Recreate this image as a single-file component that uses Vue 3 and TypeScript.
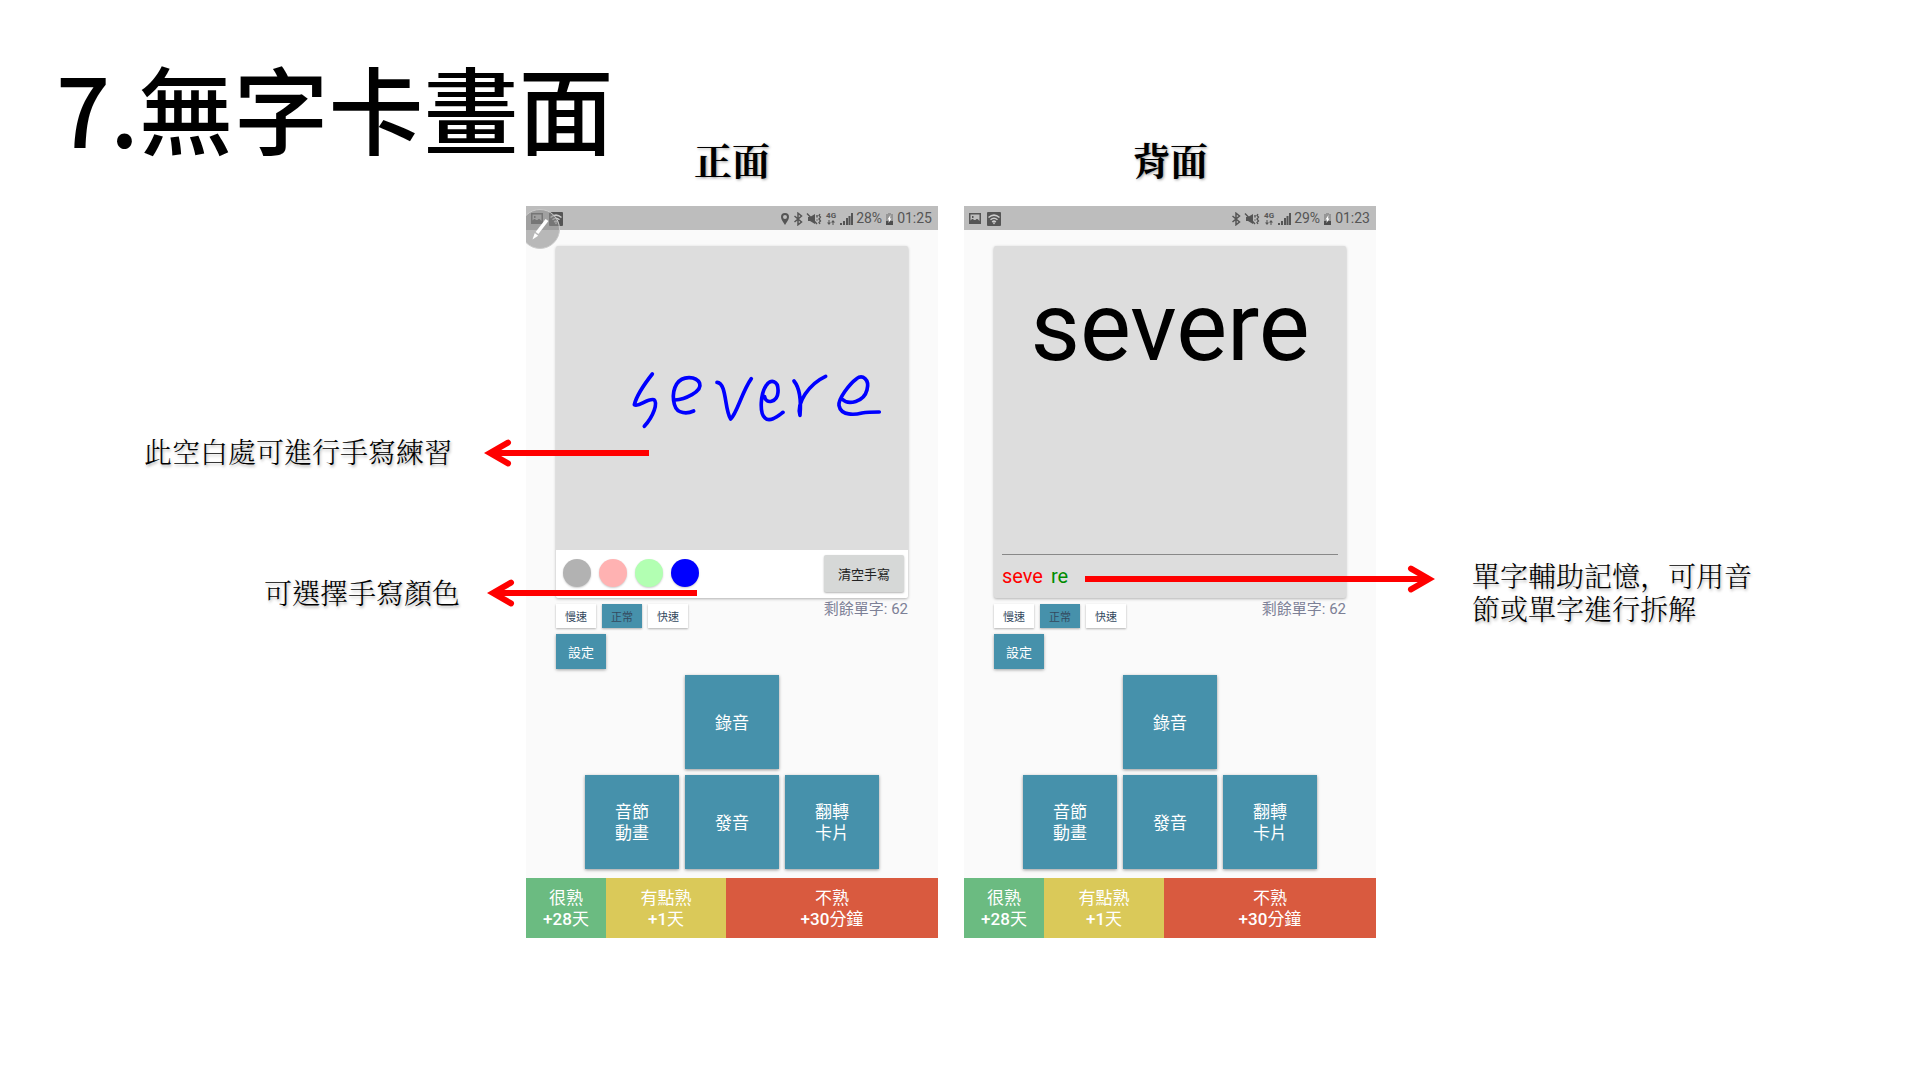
<script setup lang="ts">
import { ref } from 'vue'

interface Phone {
  id: string
  caption: string
  battery: string
  time: string
  front: boolean
}

interface Rating {
  name: string
  amount: string
  unit: string
  tone: string
}

const phones: Phone[] = [
  { id: 'front', caption: '正面', battery: '28%', time: '01:25', front: true },
  { id: 'back', caption: '背面', battery: '29%', time: '01:23', front: false },
]
const inks = [
  { name: '灰色', value: '#b2b2b2' },
  { name: '紅色', value: '#ffb2b2' },
  { name: '綠色', value: '#b2ffb2' },
  { name: '藍色', value: '#0000ff' },
]
const ink = ref('#0000ff')
const speeds = ['慢速', '正常', '快速']
const speed = ref('正常')
const ratings: Rating[] = [
  { name: '很熟', amount: '+28', unit: '天', tone: 'good' },
  { name: '有點熟', amount: '+1', unit: '天', tone: 'fair' },
  { name: '不熟', amount: '+30', unit: '分鐘', tone: 'poor' },
]
</script>

<template>
  <main class="slide">
    <h1 class="title">7.無字卡畫面</h1>
    <div class="stage">
      <div class="notes notes-left">
        <p class="note-draw">此空白處可進行手寫練習</p>
        <p class="note-color">可選擇手寫顏色</p>
      </div>

      <figure v-for="p in phones" :key="p.id" :class="['figure', p.id]">
        <figcaption class="caption">{{ p.caption }}</figcaption>
        <div class="phone">
          <div class="status">
            <svg class="icon" width="15" height="12" viewBox="0 0 15 12">
              <path fill="#555" fill-rule="evenodd" d="M0 0h12v11H0zM1.500 1.500v6l1.500-1.500h1l1 1h1.500l1-1h1l2 2v-6.500zM3 3h1.500v2H3z" />
            </svg>
            <svg class="icon" width="14" height="14" viewBox="0 0 14 14">
              <rect width="14" height="14" rx="1" fill="#555" />
              <path d="M1.500 5.500Q7 .8 12.500 5.500M3.500 7.800Q7 4.800 10.500 7.800M5.200 10Q7 8.300 8.800 10" fill="none" stroke="#ccc" stroke-width="1.500" />
              <path d="M5.500 10.500h3L7 12.500z" fill="#ccc" />
            </svg>
            <span class="spacer"></span>
            <svg v-if="p.front" class="icon" width="10" height="14" viewBox="0 0 10 14">
              <path fill="#555" fill-rule="evenodd" d="M5 1a4 4 0 0 1 4 4c0 3-2.500 5-4 8C3.500 10 1 8 1 5a4 4 0 0 1 4-4zM5 3a2 2 0 1 0 0 4 2 2 0 0 0 0-4z" />
            </svg>
            <svg class="icon" width="10" height="14" viewBox="0 0 10 14">
              <path d="M1.500 4l7 6L5 12.800V1.200L8.500 4l-7 6" fill="none" stroke="#555" stroke-width="1.500" />
            </svg>
            <svg class="icon" width="16" height="14" viewBox="0 0 16 14">
              <path fill="#555" d="M2 5h2l5-3v10L4 9H2z" />
              <path d="M1 1.500l10 10.500M11 3v2.500M11 7.500v1" stroke="#555" stroke-width="1.400" />
              <path d="M14 2l-1 1.500 1.500 1.500-1.500 2 1.500 2-1.500 1.500 1 1.500" fill="none" stroke="#555" stroke-width="1.300" />
            </svg>
            <span class="network">
              <span>4G</span>
              <svg width="8" height="5" viewBox="0 0 8 5">
                <path fill="#555" d="M1.500 0h1v2.500H4L2 5 0 2.500h1.500zM5.500 5h1V2.500H8L6 0 4 2.500h1.500z" />
              </svg>
            </span>
            <svg class="icon" width="13" height="14" viewBox="0 0 13 14">
              <path fill="#555" d="M0 11h2v2H0zM3 9h2v4H3zM6 6h2v7H6zM8.500 4h2v9h-2zM11 1h2v12h-2z" />
            </svg>
            <span>{{ p.battery }}</span>
            <svg class="icon" width="9" height="14" viewBox="0 0 9 14">
              <path fill="#969696" d="M3 1h3v1h2v7H1V2h2z" />
              <path fill="#4d4d4d" d="M1 9h7v4H1z" />
              <path fill="#fff" d="M5.500 3L2.500 7.500H4L3.500 11l3-4.500H5z" />
            </svg>
            <span>{{ p.time }}</span>
          </div>
          <div v-if="p.front" class="pen-clip">
            <svg class="pen" width="34" height="40" viewBox="0 0 34 40">
              <circle cx="14" cy="20" r="19.500" fill="#8c8c8c" fill-opacity=".6" stroke="#ccc" />
              <path d="M11 24L21 11" stroke="#fff" stroke-width="3.500" />
              <path d="M6.500 30.500l2.300-6.500 3.400 2.700z" fill="#fff" />
            </svg>
          </div>

          <div class="body">
            <section v-if="p.front" class="card">
              <svg class="canvas" viewBox="0 0 352 304" role="img" aria-label="severe">
                <g transform="translate(-36 94) scale(.3333)" fill="none" stroke="#00f" stroke-width="11" stroke-linecap="round" stroke-linejoin="round">
                  <path d="M397 102C378 126 350 166 343 194C356 203 382 174 402 179C414 189 401 228 373 259" />
                  <path d="M465 180C493 178 548 155 539 130C528 107 487 107 470 132C453 160 459 207 480 215C495 221 510 218 521 213" />
                  <path d="M591 127C621 129 613 209 632 237C650 223 666 155 694 116" />
                  <path d="M734 170C737 194 772 187 774 157C777 119 750 117 739 136C721 162 718 219 735 234C750 249 775 227 789 217" />
                  <path d="M822 123C844 150 843 191 840 226C829 189 867 132 917 109" />
                  <path d="M967 178C985 196 1032 186 1041 150C1050 117 1027 103 1010 116C988 132 955 176 957 196C963 229 1006 224 1026 219C1044 216 1064 216 1078 216" />
                </g>
              </svg>
              <div class="tools">
                <button
                  v-for="c in inks"
                  :key="c.value"
                  class="ink"
                  type="button"
                  :aria-label="c.name"
                  :aria-pressed="ink === c.value"
                  :style="{ background: c.value }"
                  @click="ink = c.value"
                ></button>
                <span class="spacer"></span>
                <button class="clear" type="button">清空手寫</button>
              </div>
            </section>
            <section v-else class="card">
              <div class="word">severe</div>
              <div class="split"><span class="syl-a">seve</span><span class="syl-b">re</span></div>
            </section>

            <div class="options">
              <div class="speeds">
                <button
                  v-for="s in speeds"
                  :key="s"
                  type="button"
                  :class="['speed', { active: s === speed }]"
                  @click="speed = s"
                >{{ s }}</button>
              </div>
              <span class="remaining">剩餘單字: 62</span>
            </div>
            <button class="settings" type="button">設定</button>
            <div class="pad">
              <button class="key record" type="button">錄音</button>
              <button class="key" type="button">音節<br />動畫</button>
              <button class="key" type="button">發音</button>
              <button class="key" type="button">翻轉<br />卡片</button>
            </div>
          </div>
          <div class="ratings">
            <button v-for="r in ratings" :key="r.name" type="button" :class="['rating', r.tone]">
              {{ r.name }}<br /><span class="amount">{{ r.amount }}</span>{{ r.unit }}
            </button>
          </div>

          <template v-if="p.front">
            <svg class="arrow arrow-draw" width="165" height="28" viewBox="0 0 165 28">
              <path d="M24 3.600L6 14l18 10.400" />
              <path class="shaft" d="M8 14h157" />
            </svg>
            <svg class="arrow arrow-color" width="210" height="28" viewBox="0 0 210 28">
              <path d="M24 3.600L6 14l18 10.400" />
              <path class="shaft" d="M8 14h202" />
            </svg>
          </template>
          <svg v-else class="arrow arrow-split" width="350" height="28" viewBox="0 0 350 28">
            <path d="M326 3.600L344 14l-18 10.400" />
            <path class="shaft" d="M342 14H0" />
          </svg>
        </div>
      </figure>

      <div class="notes notes-right">
        <p>單字輔助記憶<span class="comma">，</span>可用音<br />節或單字進行拆解</p>
      </div>
    </div>
  </main>
</template>

<style>
body {
  margin: 0;
  background: #fff;
}
</style>

<style scoped>
.slide {
  min-height: 100vh;
  box-sizing: border-box;
  padding-top: 75px;
  overflow: hidden;
  color: #000;
  font-family: Roboto, "Noto Sans CJK TC", sans-serif;
}
.title {
  margin: 0 0 6px 56px;
  font: 500 95px/64px "Noto Sans CJK TC", sans-serif;
}
.stage {
  display: grid;
  grid-template-columns: minmax(0, 526fr) minmax(400px, 438fr) minmax(374px, 412fr) minmax(0, 544fr);
}
.figure {
  margin: 0;
}
.figure.front {
  margin-right: 26px;
}
.caption {
  margin-bottom: 33px;
  font: 700 38px/28px "Noto Serif CJK TC", "Noto Sans CJK TC", serif;
  text-align: center;
  text-shadow: 1px 1px 3px rgba(0, 0, 0, 0.4);
}
.notes {
  font-family: "Noto Serif CJK TC", "Noto Sans CJK TC", serif;
  font-size: 28px;
  line-height: 33px;
  font-weight: 300;
  white-space: nowrap;
  text-shadow: 1px 2px 3px rgba(0, 0, 0, 0.3);
}
.comma {
  font-family: "Noto Serif CJK SC", "Noto Sans CJK SC", serif;
}
.notes p {
  margin: 0;
}
.notes-left {
  display: flex;
  flex-direction: column;
  align-items: flex-end;
  gap: 108px;
  padding-top: 290px;
}
.note-draw {
  padding-right: 74px;
}
.note-color {
  padding-right: 66px;
}
.notes-right {
  padding: 414px 0 0 96px;
}
.phone {
  position: relative;
  background: #fafafa;
}
.status {
  display: flex;
  align-items: center;
  gap: 3px;
  height: 24px;
  box-sizing: border-box;
  padding: 1px 6px 0 5px;
  background: #bdbdbd;
  color: #555;
  font-size: 14px;
  line-height: 23px;
}
.icon {
  flex: none;
}
.spacer {
  flex: 1;
}
.network {
  display: flex;
  flex-direction: column;
  align-items: center;
  width: 12px;
  font-size: 8px;
  line-height: 8px;
  font-weight: 700;
}
.pen-clip {
  position: absolute;
  left: 0;
  top: 3px;
  display: flex;
}
.body {
  padding: 16px 30px 9px;
}
.card {
  display: flex;
  flex-direction: column;
  min-height: 352px;
  border-radius: 2px;
  background: #ddd;
  box-shadow: 0 1px 3px rgba(0, 0, 0, 0.3);
}
.canvas {
  display: block;
  width: 100%;
}
.tools {
  flex: 1;
  display: flex;
  align-items: center;
  gap: 8px;
  padding: 0 4px 2px 7px;
  background: #fff;
  border-radius: 0 0 2px 2px;
}
button {
  border: 0;
  padding: 0;
  font-family: inherit;
  cursor: pointer;
}
.ink {
  width: 28px;
  height: 28px;
  border-radius: 50%;
  box-shadow: 0 1px 2px rgba(0, 0, 0, 0.2);
}
.clear {
  width: 80px;
  height: 37px;
  border-radius: 2px;
  background: #d6d8d7;
  color: #222;
  font-size: 13px;
  box-shadow: 0 1px 2px rgba(0, 0, 0, 0.3);
}
.word {
  flex: 1;
  padding-top: 25px;
  font-size: 96px;
  line-height: 112px;
  text-align: center;
}
.split {
  display: flex;
  gap: 8px;
  margin: 0 8px;
  border-top: 1px solid #888;
  font-size: 20px;
  line-height: 43px;
}
.syl-a {
  color: #f00;
}
.syl-b {
  color: #008c00;
}
.options {
  display: flex;
  justify-content: space-between;
  margin: 6px 0;
}
.speeds {
  display: flex;
  gap: 6px;
}
.speed {
  width: 40px;
  height: 24px;
  background: #fff;
  color: #34495e;
  font-size: 11px;
  box-shadow: 0 1px 2px rgba(0, 0, 0, 0.3);
}
.speed.active,
.settings,
.key {
  background: #4691ab;
}
.remaining {
  height: 24px;
  color: #7c8096;
  font-size: 15px;
  line-height: 11px;
}
.settings {
  display: block;
  width: 50px;
  height: 35px;
  margin-bottom: 6px;
  color: #fff;
  font-size: 13px;
  box-shadow: 0 1px 3px rgba(0, 0, 0, 0.35);
}
.pad {
  display: grid;
  grid-template-columns: repeat(3, 94px);
  grid-auto-rows: 94px;
  gap: 6px;
  justify-content: center;
}
.key {
  padding-top: 2px;
  color: #fff;
  font-size: 17px;
  line-height: 21px;
  box-shadow: 0 1px 3px rgba(0, 0, 0, 0.4);
}
.record {
  grid-column: 2;
}
.key:nth-child(2) {
  grid-column: 1;
}
.ratings {
  display: grid;
  grid-template-columns: 80fr 120fr 212fr;
}
.rating {
  height: 60px;
  padding-top: 2px;
  color: #fff;
  font-size: 17px;
  line-height: 21px;
}
.amount {
  font-weight: 500;
}
.good {
  background: #6bbb81;
}
.fair {
  background: #dac959;
}
.poor {
  background: #d95a3f;
}
.arrow {
  position: absolute;
  fill: none;
  stroke: #f00;
  stroke-width: 6;
  stroke-linecap: round;
  stroke-miterlimit: 8;
}
.shaft {
  stroke-linecap: butt;
}
.arrow-draw {
  left: -42px;
  top: 233px;
}
.arrow-color {
  left: -39px;
  top: 373px;
}
.arrow-split {
  left: 121px;
  top: 359px;
}
</style>
